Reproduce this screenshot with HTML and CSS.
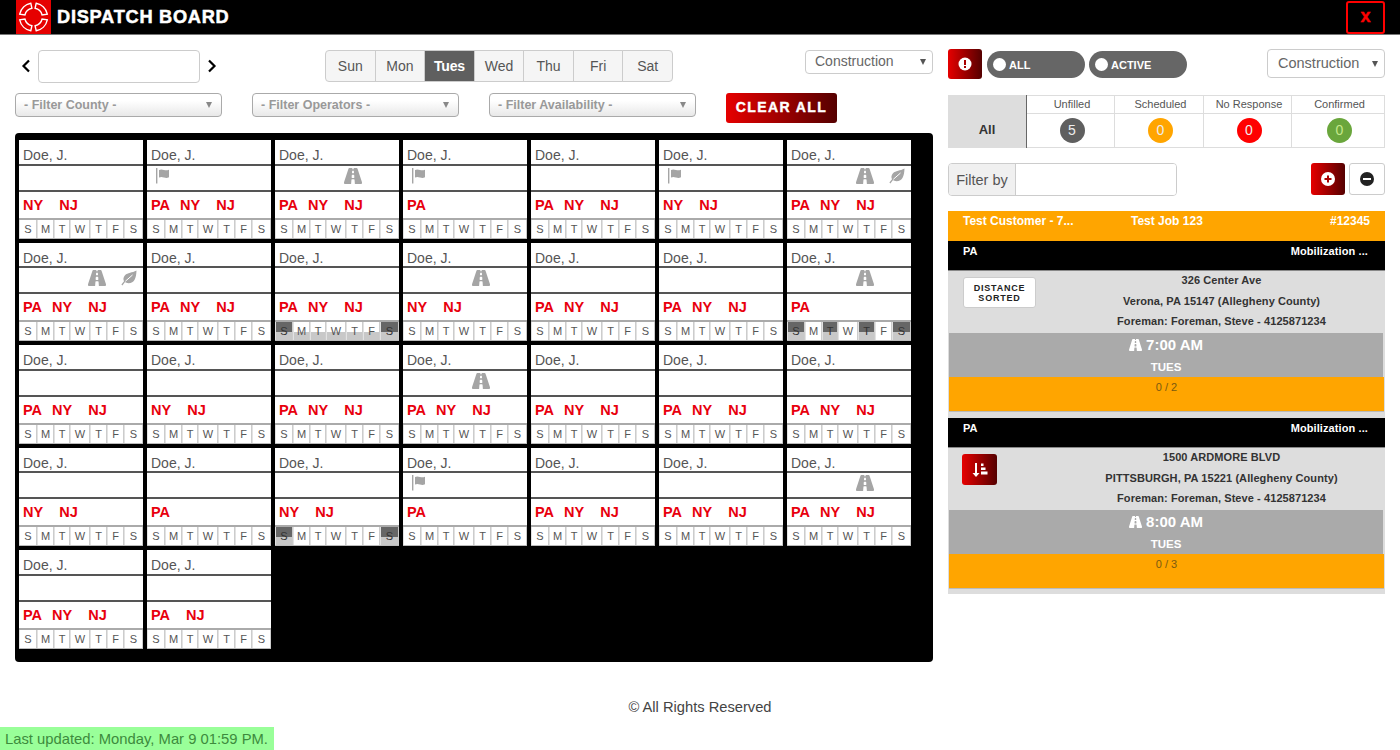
FILE: index.html
```html
<!DOCTYPE html>
<html lang="en">
<head>
<meta charset="utf-8">
<title>Dispatch Board</title>
<link rel="stylesheet" href="styles.css">
</head>
<body>
<svg class="defs" width="0" height="0" aria-hidden="true">
  <symbol id="road" viewBox="0 64 576 384" preserveAspectRatio="none"><path d="M573.19 402.67l-139.79-320C428.43 71.29 417.6 64 405.68 64h-97.59l2.45 23.16c.5 4.72-3.21 8.84-7.96 8.84h-29.16c-4.75 0-8.46-4.12-7.96-8.84L267.91 64h-97.59c-11.93 0-22.76 7.29-27.73 18.67L2.8 402.67C-6.45 423.86 8.31 448 30.54 448h196.84l10.31-97.68c.86-8.14 7.72-14.32 15.91-14.32h68.8c8.19 0 15.05 6.18 15.91 14.32L348.62 448h196.84c22.23 0 36.99-24.14 27.73-45.33zM260.4 135.16a8 8 0 0 1 7.96-7.16h39.29c4.09 0 7.53 3.09 7.96 7.16l4.6 43.58c.75 7.09-4.81 13.26-11.93 13.26h-40.54c-7.13 0-12.68-6.17-11.93-13.26l4.59-43.58zM315.64 304h-55.29c-9.5 0-16.91-8.23-15.91-17.68l5.07-48c.86-8.14 7.72-14.32 15.91-14.32h45.15c8.19 0 15.05 6.18 15.91 14.32l5.07 48c1 9.45-6.41 17.68-15.91 17.68z"/></symbol>
  <symbol id="flag" viewBox="0 0 15 16"><rect x="0" y="0" width="1.4" height="15.5"/><path d="M3 2c2-1 3-.6 5 0s3 .4 5-.3v7.6c-2 .8-3 .8-5 .2s-3-.8-5 0z"/></symbol>
  <symbol id="leaf" viewBox="0 0 16 16"><path d="M15.500.5C15.200 8 13.500 13.200 7.500 13.200c-1.500 0-2.700-.5-3.500-1.200L1.400 15.400.4 14.600 3 11.200C2 9.500 2.300 7 4 5.200 6.700 2.500 11 3 15.500.5z"/><path d="M4.300 11.300L11.500 5" fill="none" stroke="#fff" stroke-width="1"/></symbol>
</svg>

<header class="topbar">
  <div class="brand">
    <div class="logo">
      <svg width="35" height="34" viewBox="0 0 35 34" fill="none" stroke="#fff" stroke-width="1.4">
        <path d="M14.800 3.200l1.100 5.100a9 9 0 0 0-7 6.700l-5.200-.9a14 14 0 0 1 11.100-10.900z"/>
        <path d="M20.200 3.200l-1.100 5.100a9 9 0 0 1 7 6.700l5.200-.9a14 14 0 0 0-11.100-10.900z"/>
        <path d="M14.800 30.800l1.100-5.100a9 9 0 0 1-7-6.700l-5.200.9a14 14 0 0 0 11.100 10.900z"/>
        <path d="M20.200 30.800l-1.100-5.100a9 9 0 0 0 7-6.700l5.200.9a14 14 0 0 1-11.100 10.900z"/>
      </svg>
    </div>
    <h1 class="title">DISPATCH BOARD</h1>
  </div>
  <button class="close">x</button>
</header>

<main class="main">
  <section class="left">
    <div class="tools-a">
      <div class="pager">
        <svg class="chev" width="10" height="14" viewBox="0 0 10 14"><path d="M8 1.500L2.500 7 8 12.500" fill="none" stroke="#000" stroke-width="2.200"/></svg>
        <input class="date" type="text">
        <svg class="chev" width="10" height="14" viewBox="0 0 10 14"><path d="M2 1.500L7.500 7 2 12.500" fill="none" stroke="#000" stroke-width="2.200"/></svg>
      </div>
      <div class="days">
        <span class="day">Sun</span><span class="day">Mon</span><span class="day on">Tues</span><span class="day">Wed</span><span class="day">Thu</span><span class="day">Fri</span><span class="day">Sat</span>
      </div>
      <div class="sel sel-a">Construction<i class="caret"></i></div>
    </div>
    <div class="tools-b">
      <div class="filter">- Filter County -<i class="caret"></i></div>
      <div class="filter">- Filter Operators -<i class="caret"></i></div>
      <div class="filter">- Filter Availability -<i class="caret"></i></div>
      <button class="clear">CLEAR ALL</button>
    </div>

    <div class="board">
      <!-- row 1 -->
      <article class="card"><div class="name">Doe, J.</div><div class="icons"></div><div class="st"><b class="ny">NY</b><b class="nj">NJ</b></div><div class="wk"><span>S</span><span>M</span><span>T</span><span>W</span><span>T</span><span>F</span><span>S</span></div></article>
      <article class="card"><div class="name">Doe, J.</div><div class="icons"><svg class="flag"><use href="#flag"/></svg></div><div class="st"><b>PA</b><b class="ny">NY</b><b class="nj">NJ</b></div><div class="wk"><span>S</span><span>M</span><span>T</span><span>W</span><span>T</span><span>F</span><span>S</span></div></article>
      <article class="card"><div class="name">Doe, J.</div><div class="icons"><svg class="road"><use href="#road"/></svg></div><div class="st"><b>PA</b><b class="ny">NY</b><b class="nj">NJ</b></div><div class="wk"><span>S</span><span>M</span><span>T</span><span>W</span><span>T</span><span>F</span><span>S</span></div></article>
      <article class="card"><div class="name">Doe, J.</div><div class="icons"><svg class="flag"><use href="#flag"/></svg></div><div class="st"><b>PA</b></div><div class="wk"><span>S</span><span>M</span><span>T</span><span>W</span><span>T</span><span>F</span><span>S</span></div></article>
      <article class="card"><div class="name">Doe, J.</div><div class="icons"></div><div class="st"><b>PA</b><b class="ny">NY</b><b class="nj">NJ</b></div><div class="wk"><span>S</span><span>M</span><span>T</span><span>W</span><span>T</span><span>F</span><span>S</span></div></article>
      <article class="card"><div class="name">Doe, J.</div><div class="icons"><svg class="flag"><use href="#flag"/></svg></div><div class="st"><b class="ny">NY</b><b class="nj">NJ</b></div><div class="wk"><span>S</span><span>M</span><span>T</span><span>W</span><span>T</span><span>F</span><span>S</span></div></article>
      <article class="card"><div class="name">Doe, J.</div><div class="icons"><svg class="road"><use href="#road"/></svg><svg class="leaf"><use href="#leaf"/></svg></div><div class="st"><b>PA</b><b class="ny">NY</b><b class="nj">NJ</b></div><div class="wk"><span>S</span><span>M</span><span>T</span><span>W</span><span>T</span><span>F</span><span>S</span></div></article>
      <!-- row 2 -->
      <article class="card"><div class="name">Doe, J.</div><div class="icons"><svg class="road"><use href="#road"/></svg><svg class="leaf"><use href="#leaf"/></svg></div><div class="st"><b>PA</b><b class="ny">NY</b><b class="nj">NJ</b></div><div class="wk"><span>S</span><span>M</span><span>T</span><span>W</span><span>T</span><span>F</span><span>S</span></div></article>
      <article class="card"><div class="name">Doe, J.</div><div class="icons"></div><div class="st"><b>PA</b><b class="ny">NY</b><b class="nj">NJ</b></div><div class="wk"><span>S</span><span>M</span><span>T</span><span>W</span><span>T</span><span>F</span><span>S</span></div></article>
      <article class="card"><div class="name">Doe, J.</div><div class="icons"></div><div class="st"><b>PA</b><b class="ny">NY</b><b class="nj">NJ</b></div><div class="wk"><span class="off">S</span><span class="half">M</span><span class="half">T</span><span class="half">W</span><span class="half">T</span><span class="half">F</span><span class="off">S</span></div></article>
      <article class="card"><div class="name">Doe, J.</div><div class="icons"><svg class="road"><use href="#road"/></svg></div><div class="st"><b class="ny">NY</b><b class="nj">NJ</b></div><div class="wk"><span>S</span><span>M</span><span>T</span><span>W</span><span>T</span><span>F</span><span>S</span></div></article>
      <article class="card"><div class="name">Doe, J.</div><div class="icons"></div><div class="st"><b>PA</b><b class="ny">NY</b><b class="nj">NJ</b></div><div class="wk"><span>S</span><span>M</span><span>T</span><span>W</span><span>T</span><span>F</span><span>S</span></div></article>
      <article class="card"><div class="name">Doe, J.</div><div class="icons"></div><div class="st"><b>PA</b><b class="ny">NY</b><b class="nj">NJ</b></div><div class="wk"><span>S</span><span>M</span><span>T</span><span>W</span><span>T</span><span>F</span><span>S</span></div></article>
      <article class="card"><div class="name">Doe, J.</div><div class="icons"><svg class="road"><use href="#road"/></svg></div><div class="st"><b>PA</b></div><div class="wk"><span class="off">S</span><span>M</span><span class="off">T</span><span>W</span><span class="off">T</span><span>F</span><span class="off">S</span></div></article>
      <!-- row 3 -->
      <article class="card"><div class="name">Doe, J.</div><div class="icons"></div><div class="st"><b>PA</b><b class="ny">NY</b><b class="nj">NJ</b></div><div class="wk"><span>S</span><span>M</span><span>T</span><span>W</span><span>T</span><span>F</span><span>S</span></div></article>
      <article class="card"><div class="name">Doe, J.</div><div class="icons"></div><div class="st"><b class="ny">NY</b><b class="nj">NJ</b></div><div class="wk"><span>S</span><span>M</span><span>T</span><span>W</span><span>T</span><span>F</span><span>S</span></div></article>
      <article class="card"><div class="name">Doe, J.</div><div class="icons"></div><div class="st"><b>PA</b><b class="ny">NY</b><b class="nj">NJ</b></div><div class="wk"><span>S</span><span>M</span><span>T</span><span>W</span><span>T</span><span>F</span><span>S</span></div></article>
      <article class="card"><div class="name">Doe, J.</div><div class="icons"><svg class="road"><use href="#road"/></svg></div><div class="st"><b>PA</b><b class="ny">NY</b><b class="nj">NJ</b></div><div class="wk"><span>S</span><span>M</span><span>T</span><span>W</span><span>T</span><span>F</span><span>S</span></div></article>
      <article class="card"><div class="name">Doe, J.</div><div class="icons"></div><div class="st"><b>PA</b><b class="ny">NY</b><b class="nj">NJ</b></div><div class="wk"><span>S</span><span>M</span><span>T</span><span>W</span><span>T</span><span>F</span><span>S</span></div></article>
      <article class="card"><div class="name">Doe, J.</div><div class="icons"></div><div class="st"><b>PA</b><b class="ny">NY</b><b class="nj">NJ</b></div><div class="wk"><span>S</span><span>M</span><span>T</span><span>W</span><span>T</span><span>F</span><span>S</span></div></article>
      <article class="card"><div class="name">Doe, J.</div><div class="icons"></div><div class="st"><b>PA</b><b class="ny">NY</b><b class="nj">NJ</b></div><div class="wk"><span>S</span><span>M</span><span>T</span><span>W</span><span>T</span><span>F</span><span>S</span></div></article>
      <!-- row 4 -->
      <article class="card"><div class="name">Doe, J.</div><div class="icons"></div><div class="st"><b class="ny">NY</b><b class="nj">NJ</b></div><div class="wk"><span>S</span><span>M</span><span>T</span><span>W</span><span>T</span><span>F</span><span>S</span></div></article>
      <article class="card"><div class="name">Doe, J.</div><div class="icons"></div><div class="st"><b>PA</b></div><div class="wk"><span>S</span><span>M</span><span>T</span><span>W</span><span>T</span><span>F</span><span>S</span></div></article>
      <article class="card"><div class="name">Doe, J.</div><div class="icons"></div><div class="st"><b class="ny">NY</b><b class="nj">NJ</b></div><div class="wk"><span class="off">S</span><span>M</span><span>T</span><span>W</span><span>T</span><span>F</span><span class="off">S</span></div></article>
      <article class="card"><div class="name">Doe, J.</div><div class="icons"><svg class="flag"><use href="#flag"/></svg></div><div class="st"><b>PA</b></div><div class="wk"><span>S</span><span>M</span><span>T</span><span>W</span><span>T</span><span>F</span><span>S</span></div></article>
      <article class="card"><div class="name">Doe, J.</div><div class="icons"></div><div class="st"><b>PA</b><b class="ny">NY</b><b class="nj">NJ</b></div><div class="wk"><span>S</span><span>M</span><span>T</span><span>W</span><span>T</span><span>F</span><span>S</span></div></article>
      <article class="card"><div class="name">Doe, J.</div><div class="icons"></div><div class="st"><b>PA</b><b class="ny">NY</b><b class="nj">NJ</b></div><div class="wk"><span>S</span><span>M</span><span>T</span><span>W</span><span>T</span><span>F</span><span>S</span></div></article>
      <article class="card"><div class="name">Doe, J.</div><div class="icons"><svg class="road"><use href="#road"/></svg></div><div class="st"><b>PA</b><b class="ny">NY</b><b class="nj">NJ</b></div><div class="wk"><span>S</span><span>M</span><span>T</span><span>W</span><span>T</span><span>F</span><span>S</span></div></article>
      <!-- row 5 -->
      <article class="card"><div class="name">Doe, J.</div><div class="icons"></div><div class="st"><b>PA</b><b class="ny">NY</b><b class="nj">NJ</b></div><div class="wk"><span>S</span><span>M</span><span>T</span><span>W</span><span>T</span><span>F</span><span>S</span></div></article>
      <article class="card"><div class="name">Doe, J.</div><div class="icons"></div><div class="st"><b>PA</b><b class="nj">NJ</b></div><div class="wk"><span>S</span><span>M</span><span>T</span><span>W</span><span>T</span><span>F</span><span>S</span></div></article>
    </div>
  </section>

  <aside class="right">
    <div class="controls">
      <button class="rbtn alert"><svg width="14" height="14" viewBox="0 0 14 14"><circle cx="7" cy="7" r="6.500" fill="#fff"/><rect x="6" y="3" width="2" height="5" fill="#a00"/><rect x="6" y="9" width="2" height="2" fill="#a00"/></svg></button>
      <div class="toggle"><i class="knob"></i>ALL</div>
      <div class="toggle"><i class="knob"></i>ACTIVE</div>
      <div class="sel sel-b">Construction<i class="caret"></i></div>
    </div>

    <div class="stats">
      <div class="stat-all">All</div>
      <div class="stat-col"><div class="stat-h">Unfilled</div><div class="stat-v"><span class="badge grey">5</span></div></div>
      <div class="stat-col"><div class="stat-h">Scheduled</div><div class="stat-v"><span class="badge orange">0</span></div></div>
      <div class="stat-col"><div class="stat-h">No Response</div><div class="stat-v"><span class="badge red">0</span></div></div>
      <div class="stat-col"><div class="stat-h">Confirmed</div><div class="stat-v"><span class="badge green">0</span></div></div>
    </div>

    <div class="filter-row">
      <div class="filter-by"><span class="addon">Filter by</span><input class="filter-input" type="text"></div>
      <div class="pm">
        <button class="rbtn plus"><svg width="14" height="14" viewBox="0 0 14 14"><circle cx="7" cy="7" r="7" fill="#fff"/><rect x="3.500" y="6" width="7" height="2" fill="#a00"/><rect x="6" y="3.500" width="2" height="7" fill="#a00"/></svg></button>
        <button class="minus"><svg width="14" height="14" viewBox="0 0 14 14"><circle cx="7" cy="7" r="7" fill="#222"/><rect x="3" y="6" width="8" height="2" fill="#fff"/></svg></button>
      </div>
    </div>

    <div class="job">
      <div class="job-head"><span class="jh-a">Test Customer - 7...</span><span class="jh-b">Test Job 123</span><span class="jh-c">#12345</span></div>
      <div class="sub-head"><span>PA</span><span>Mobilization ...</span></div>
      <div class="sub-body">
        <div class="sort-slot"><div class="dist">DISTANCE<br>SORTED</div></div>
        <div class="addr"><p>326 Center Ave</p><p>Verona, PA 15147 (Allegheny County)</p><p>Foreman: Foreman, Steve - 4125871234</p></div>
      </div>
      <div class="time"><div class="clock"><svg class="road-w"><use href="#road"/></svg> 7:00 AM</div><div class="tday">TUES</div></div>
      <div class="count">0 / 2</div>
      <div class="sep"></div>
      <div class="sub-head"><span>PA</span><span>Mobilization ...</span></div>
      <div class="sub-body">
        <div class="sort-slot"><button class="rbtn sort"><svg width="16" height="16" viewBox="0 0 16 16" fill="#fff"><path d="M3 1h2v10h2.500L4 15 .5 11H3z"/><rect x="9" y="1.500" width="2.500" height="2.500"/><rect x="9" y="5.500" width="4.500" height="2.500"/><rect x="9" y="9.500" width="6.500" height="3"/></svg></button></div>
        <div class="addr"><p>1500 ARDMORE BLVD</p><p>PITTSBURGH, PA 15221 (Allegheny County)</p><p>Foreman: Foreman, Steve - 4125871234</p></div>
      </div>
      <div class="time"><div class="clock"><svg class="road-w"><use href="#road"/></svg> 8:00 AM</div><div class="tday">TUES</div></div>
      <div class="count">0 / 3</div>
      <div class="tail"></div>
    </div>
  </aside>
</main>

<footer class="foot">© All Rights Reserved</footer>
<div class="updated">Last updated: Monday, Mar 9 01:59 PM.</div>
</body>
</html>
```
FILE: styles.css
```css
* { box-sizing: border-box; }
html, body { margin: 0; height: 750px; overflow: hidden; }
body { position: relative; background: #fff; font-family: "Liberation Sans", Arial, sans-serif; color: #555; }
.defs { position: absolute; }
button { font-family: inherit; cursor: pointer; }

.topbar { height: 35px; background: #000; border-bottom: 1px solid #777; display: flex; justify-content: space-between; align-items: flex-start; padding: 0 15px 0 16px; }
.brand { display: flex; align-items: center; gap: 6px; height: 34px; }
.logo { width: 35px; height: 34px; background: #e60000; }
.logo svg { display: block; }
.title { margin: 0; color: #fff; font-size: 18.200px; font-weight: 700; letter-spacing: .75px; -webkit-text-stroke: .5px #fff; }
.close { width: 39px; height: 33px; margin-top: 1px; background: #000; color: #f00; border: 2px solid #f00; border-radius: 3px; font-size: 18px; font-weight: 700; -webkit-text-stroke: .4px #f00; padding: 0 0 3px; }

.main { display: flex; gap: 15px; padding: 0 15px; }
.left { width: 918px; }
.right { width: 437px; }

.tools-a { display: flex; align-items: flex-start; height: 58px; padding-top: 15px; }
.pager { display: flex; align-items: center; gap: 7px; width: 311px; padding-left: 6px; height: 32px; }
.date { width: 162px; height: 33px; border: 1px solid #ccc; border-radius: 4px; background: #fff; }
.days { display: flex; height: 32px; width: 348px; margin-left: -1px; }
.day { flex: 1 1 0; display: flex; align-items: center; justify-content: center; font-size: 14px; color: #555; background: #f5f5f5; border: 1px solid #ccc; margin-left: -1px; padding-bottom: 1px; }
.day:first-child { border-radius: 4px 0 0 4px; margin-left: 0; }
.day:last-child { border-radius: 0 4px 4px 0; }
.day.on { background: #5f5f5f; color: #fff; font-weight: 700; font-size: 14px; letter-spacing: -.2px; }
.sel { position: relative; background: #fff; border: 1px solid #ccc; border-radius: 4px; color: #666; display: flex; align-items: center; }
.sel-a { width: 128px; height: 24px; margin-left: 132px; padding: 0 0 2px 9px; font-size: 14px; }
.caret { position: absolute; right: 6px; top: 50%; margin-top: -3px; width: 0; height: 0; border-left: 3.500px solid transparent; border-right: 3.500px solid transparent; border-top: 6px solid #555; }

.tools-b { display: flex; gap: 30px; height: 39.500px; align-items: flex-start; }
.filter { position: relative; width: 207px; height: 24px; border: 1px solid #aaa; border-radius: 4px; background: linear-gradient(#fff, #fff 30%, #e8e8e8); color: #999; font-size: 12.500px; font-weight: 700; padding: 4px 0 0 8px; }
.filter .caret { right: 9px; border-top-color: #888; }
.clear { width: 111px; height: 30px; border: 0; border-radius: 3px; background: linear-gradient(90deg, #e60000, #550000); color: #fff; font-size: 14px; font-weight: 700; letter-spacing: 1.400px; -webkit-text-stroke: .4px #fff; padding: 0 0 2px; }

.board { width: 918px; height: 529.500px; background: #000; border-radius: 4px; padding: 7.500px 4px; display: grid; grid-template-columns: repeat(7, 124px); grid-auto-rows: 98.500px; gap: 4px; align-content: start; }
.card { background: #fff; display: flex; flex-direction: column; }
.name { height: 26px; border-bottom: 2px solid #555; font-size: 14px; line-height: 31px; padding-left: 4px; color: #555; overflow: hidden; }
.icons { height: 26px; border-bottom: 2px solid #555; display: grid; grid-template-columns: 60px 36px 1fr; align-items: start; }
.flag { grid-column: 1; width: 15px; height: 16px; margin: 2px 0 0 9px; fill: #a5a5a5; }
.road { grid-column: 2; width: 18px; height: 16px; justify-self: center; margin-top: 2px; fill: #a5a5a5; }
.leaf { grid-column: 3; width: 16px; height: 16px; margin: 2px 0 0 6px; fill: #a5a5a5; }
.st { height: 26px; padding: 5px 0 0 4px; color: #e8000d; font-size: 14.500px; white-space: nowrap; }
.st b { font-weight: 700; }
.st .ny { margin-left: 10px; }
.st .nj { margin-left: 16px; }
.st .ny:first-child { margin-left: 0; }
.wk { flex: 1; display: grid; grid-template-columns: 18fr 17fr 16fr 20fr 17fr 17fr 19fr; border-top: 2px solid #aaa; border-bottom: 1px solid #bbb; }
.wk span { font-size: 11px; color: #555; text-align: center; line-height: 18px; border-right: 1px solid #ccc; border-left: 1px solid #e2e2e2; }
.wk .off { background: linear-gradient(#666, #666 55%, #c8c8c8 55%); color: #333; }
.wk .half { background: linear-gradient(#fff 55%, #c8c8c8 55%); }

.controls { display: flex; align-items: flex-start; height: 60px; padding-top: 14px; }
.rbtn { border: 0; border-radius: 3px; background: linear-gradient(90deg, #e60000, #550000); display: flex; align-items: center; justify-content: center; padding: 0; }
.alert { width: 34px; height: 30px; }
.toggle { width: 98px; height: 27px; margin: 2px 0 0 5px; background: #666; border-radius: 14px; color: #fff; font-size: 11px; font-weight: 700; display: flex; align-items: center; gap: 3px; padding-left: 6px; }
.knob { width: 13px; height: 13px; background: #fff; border-radius: 50%; }
.toggle + .toggle { margin-left: 4px; }
.sel-b { width: 118px; height: 29px; margin-left: auto; padding: 0 0 1px 10px; font-size: 14.500px; }

.stats { display: grid; grid-template-columns: 79px 88px 89px 88px 93px; height: 53px; margin-bottom: 15px; }
.stat-all { background: #ddd; border-right: 1px solid #666; color: #333; font-weight: 700; font-size: 13px; display: flex; align-items: flex-end; justify-content: center; padding-bottom: 11px; }
.stat-col { border: 1px solid #ddd; border-left: 0; display: flex; flex-direction: column; }
.stat-h { height: 18px; border-bottom: 1px solid #ddd; text-align: center; font-size: 11px; line-height: 16px; color: #555; padding-left: 3px; }
.stat-v { flex: 1; display: flex; align-items: center; justify-content: center; padding-left: 3px; }
.badge { width: 25px; height: 25px; border-radius: 50%; color: #eee; font-size: 14px; display: flex; align-items: center; justify-content: center; padding-bottom: 2px; }
.grey { background: #5f5f5f; }
.orange { background: #ffa500; }
.red { background: #f00; }
.green { background: #6aa63c; color: #c5e88a; }

.filter-row { display: flex; justify-content: space-between; height: 48px; }
.filter-by { display: flex; width: 229px; height: 33px; border: 1px solid #ccc; border-radius: 4px; overflow: hidden; }
.addon { width: 67px; background: #f0f0f0; border-right: 1px solid #ccc; font-size: 14.500px; color: #555; display: flex; align-items: center; justify-content: center; }
.filter-input { flex: 1; min-width: 0; border: 0; background: #fff; }
.pm { display: flex; gap: 4px; }
.plus { width: 34px; height: 32px; }
.minus { width: 36px; height: 32px; background: #fff; border: 1px solid #ccc; border-radius: 3px; display: flex; align-items: center; justify-content: center; padding: 0; }

.job { background: #ddd; font-size: 11px; font-weight: 700; }
.job-head { display: grid; grid-template-columns: 168px 1fr auto; height: 30px; background: #ffa500; color: #fff; font-size: 12px; padding: 3px 15px 0; }
.sub-head { display: flex; justify-content: space-between; height: 30px; background: #000; color: #fff; padding: 4px 17px 0 15px; border-bottom: 1px solid #888; font-size: 11px; letter-spacing: .1px; }
.sub-body { display: grid; grid-template-columns: 120px 1fr; height: 62px; }
.sort-slot { padding: 6px 0 0 15px; }
.dist { width: 73px; height: 31px; background: #fff; border: 1px solid #ccc; border-radius: 3px; color: #222; font-size: 9px; line-height: 10px; font-weight: 700; letter-spacing: .8px; text-align: center; padding-top: 5px; white-space: nowrap; }
.sort { width: 35px; height: 31px; margin-left: -1px; }
.addr { color: #333; text-align: center; margin: -1px 5px 0 -5px; letter-spacing: .08px; }
.addr p { margin: 0; height: 20.500px; line-height: 21px; white-space: nowrap; }
.time { height: 44px; margin: 0 2px 0 1px; background: #aaa; color: #fff; width: 434px; text-align: center; }
.clock { font-size: 15px; line-height: 24px; }
.road-w { width: 13px; height: 12px; fill: #fff; vertical-align: -1px; }
.tday { font-size: 11.500px; line-height: 20px; }
.count { height: 35px; margin: 0 2px 0 1px; width: 435px; background: #ffa500; color: #7a5a10; font-weight: 400; font-size: 11px; text-align: center; padding-top: 4px; border-bottom: 1px solid #bbb; }
.sep { height: 6px; }
.tail { height: 5px; }

.foot { position: absolute; left: 0; right: 0; top: 699px; text-align: center; font-size: 14.700px; color: #444; }
.updated { position: absolute; left: 0; bottom: 0; width: 274px; height: 23px; background: #9f9; color: #3d8b3d; font-size: 14.800px; line-height: 24px; padding-left: 5px; white-space: nowrap; }
```
